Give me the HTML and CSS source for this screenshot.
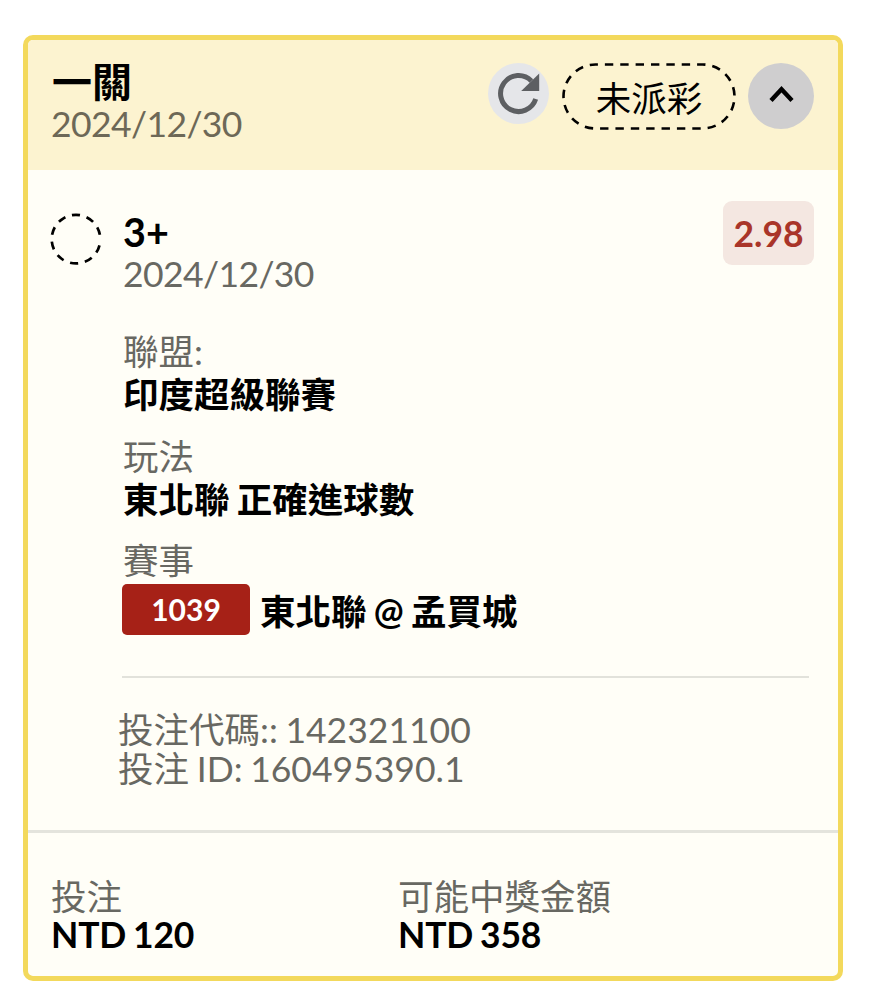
FILE: index.html
```html
<!DOCTYPE html>
<html lang="zh-Hant">
<head>
    <meta charset="UTF-8">
    <meta name="viewport" content="width=device-width, initial-scale=1.0">
    <title>投注</title>
    <link rel="stylesheet" href="styles.css">
</head>
<body>
    <div class="card">
        <div class="card-header">
            <div class="heading">
                <h1>一關</h1>
                <div class="muted date">2024/12/30</div>
            </div>
            <div class="actions">
                <button class="refresh">
                    <svg width="61" height="61" viewBox="0 0 61 61">
                        <path d="M47.7 36.1A18 18 0 1 1 43.4 17.9" fill="none" stroke="#5d5f62" stroke-width="5"/>
                        <path d="M51.2 10.4V28.1H33.2Z" fill="#5d5f62"/>
                    </svg>
                </button>
                <div class="status">
                    <svg width="174" height="67" viewBox="0 0 174 67">
                        <rect x="1.5" y="1.5" width="171" height="64" rx="32" fill="none" stroke="#000" stroke-width="2.6" stroke-dasharray="8.4 6.97" stroke-dashoffset="6"/>
                    </svg>
                    <span>未派彩</span>
                </div>
                <button class="toggle">
                    <svg width="66" height="66" viewBox="0 0 66 66">
                        <path d="M23 37.4L33.5 26.2L44 37.4" fill="none" stroke="#000" stroke-width="4.4"/>
                    </svg>
                </button>
            </div>
        </div>
        <div class="bet">
            <svg class="pending" width="52" height="52" viewBox="0 0 52 52">
                <path d="M49.5 32.3A24.3 24.3 0 1 1 49.9 21.8" fill="none" stroke="#000" stroke-width="2.7" stroke-dasharray="8 6.85"/>
            </svg>
            <div class="bet-main">
                <div class="bet-top">
                    <div>
                        <h2>3+</h2>
                        <div class="muted date">2024/12/30</div>
                    </div>
                    <div class="odds">2.98</div>
                </div>
                <div class="field">
                    <div class="muted">聯盟:</div>
                    <div class="value">印度超級聯賽</div>
                </div>
                <div class="field">
                    <div class="muted">玩法</div>
                    <div class="value">東北聯 正確進球數</div>
                </div>
                <div class="field">
                    <div class="muted">賽事</div>
                    <div class="match">
                        <span class="code">1039</span>
                        <span>東北聯 @ 孟買城</span>
                    </div>
                </div>
                <div class="ids muted">
                    <div>投注代碼:: 142321100</div>
                    <div>投注 ID: 160495390.1</div>
                </div>
            </div>
        </div>
        <div class="card-footer">
            <div class="stake">
                <div class="muted">投注</div>
                <div class="amount">NTD 120</div>
            </div>
            <div class="payout">
                <div class="muted">可能中獎金額</div>
                <div class="amount">NTD 358</div>
            </div>
        </div>
    </div>
</body>
</html>
```
FILE: styles.css
```css
* {
    box-sizing: border-box;
}
body {
    margin: 0;
    background: #fff;
    color: #000;
    font-family: Lato, "Noto Sans CJK TC", sans-serif;
    font-size: 35.5px;
    line-height: 39px;
    word-spacing: -1.4px;
}
h1, h2 {
    margin: 0;
}
svg {
    display: block;
}
button {
    padding: 0;
    border: none;
    border-radius: 50%;
    cursor: pointer;
}
.muted {
    color: #686862;
}
.date {
    letter-spacing: -0.6px;
}
.card {
    width: 820px;
    height: 946px;
    margin: 35px 0 0 23px;
    border: 5px solid #f3d95c;
    border-radius: 10px;
    background: #fffef7;
    overflow: hidden;
    white-space: nowrap;
}
.card-header {
    display: flex;
    justify-content: space-between;
    height: 130px;
    padding: 20px 24px 0 23px;
    background: #fcf3d0;
}
.heading {
    padding-top: 1px;
}
.card-header h1 {
    padding-left: 1px;
    font-size: 40px;
    line-height: 43px;
}
.card-header .muted {
    color: #6d6857;
}
.actions {
    display: flex;
    align-items: flex-start;
    padding-top: 3px;
}
.refresh {
    width: 61px;
    height: 61px;
    margin-right: 13px;
    background: #e5e6e9;
}
.status {
    position: relative;
    width: 174px;
    height: 67px;
    margin-right: 12px;
    line-height: 71px;
    text-align: center;
}
.status svg {
    position: absolute;
    top: 0;
    left: 0;
}
.toggle {
    width: 66px;
    height: 66px;
    background: #cfcecf;
}
.bet {
    display: flex;
    height: 660px;
    padding: 31px 24px 0 22px;
}
.pending {
    flex: none;
    margin: 12px 21px 0 0;
}
.bet-main {
    flex: 1;
}
.bet-top {
    display: flex;
    justify-content: space-between;
    height: 129px;
}
.bet-top h2 {
    padding-top: 9px;
    font-size: 39.5px;
    line-height: 43px;
}
.bet-top .date {
    padding-top: 1px;
}
.odds {
    width: 91px;
    height: 64px;
    border-radius: 9px;
    background: #f4e7e1;
    color: #a93529;
    font-weight: bold;
    line-height: 65px;
    text-align: center;
}
.field {
    margin-bottom: 18.5px;
    line-height: 43px;
}
.value, .match {
    font-weight: bold;
}
.match {
    display: flex;
    align-items: center;
    gap: 10px;
    height: 51px;
    margin: 2px 0 0 -1px;
    line-height: 57px;
}
.match span:last-child {
    padding-top: 3px;
}
.code {
    width: 128px;
    height: 51px;
    border-radius: 5px;
    background: #a62117;
    color: #fff;
    font-size: 30px;
    line-height: 51px;
    text-align: center;
}
.ids {
    margin: 41px 5px 0 -1px;
    padding-top: 33px;
    border-top: 2px solid #e2e2db;
    line-height: 38.5px;
}
.ids div {
    margin-left: -4px;
}
.card-footer {
    display: flex;
    padding: 44px 23px 0;
    border-top: 3px solid #e4e4dd;
}
.stake {
    width: 347px;
}
.amount {
    font-weight: bold;
    line-height: 38px;
    letter-spacing: -0.2px;
}
```
